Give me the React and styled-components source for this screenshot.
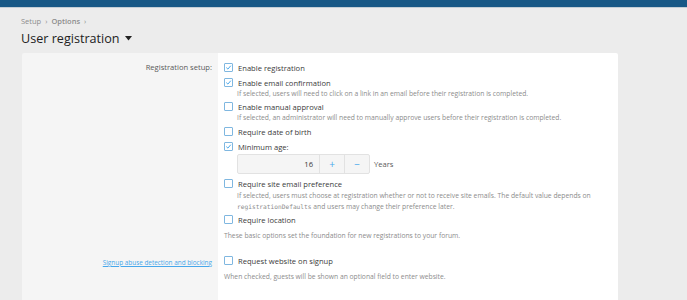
import React from 'react';
import styled, { createGlobalStyle } from 'styled-components';

const GlobalStyle = createGlobalStyle`
  html, body {
    margin: 0;
    padding: 0;
    background: #ececec;
    font-family: "Open Sans", "Liberation Sans", sans-serif;
    overflow: hidden;
  }
`;

const TopBar = styled.div`
  height: 7px;
  background: #185886;
  border-bottom: 1px solid #c4ced6;
`;

const Main = styled.div`
  padding: 7px 69px 0 21px;
`;

const Crumbs = styled.div`
  display: flex;
  align-items: center;
  gap: 4px;
  font-size: 7.5px;
  color: #8c8c8c;
  height: 12px;
`;

const Crumb = styled.span`
  font-weight: ${(p) => (p.bold ? 600 : 400)};
`;

const Title = styled.h1`
  margin: 1px 0 0;
  font-size: 12.6px;
  font-weight: 400;
  color: #222;
  display: flex;
  align-items: center;
  gap: 5px;
  height: 20px;
`;

const Block = styled.div`
  margin-top: 5px;
  margin-left: 1px;
  display: grid;
  grid-template-columns: 196px 1fr;
  border-radius: 2px 2px 0 0;
  overflow: hidden;
  height: 247px;
`;

const LabelCol = styled.div`
  background: #f5f5f5;
  padding-right: 6px;
  display: flex;
  flex-direction: column;
  align-items: flex-end;
`;

const FieldCol = styled.div`
  background: #fff;
  padding: 9px 6px 0 6px;
`;

const RowLabel = styled.div`
  font-size: 7.6px;
  color: #5a5a5a;
  margin-top: ${(p) => p.top}px;
  height: 11px;
  line-height: 11px;
`;

const Link = styled.a`
  font-size: 6.4px;
  color: #47a7eb;
  text-decoration: underline;
`;

const Option = styled.div`
  margin-bottom: ${(p) => p.gap ?? 4}px;
  margin-top: ${(p) => p.top ?? 0}px;
`;

const Check = styled.label`
  display: flex;
  align-items: center;
  gap: 5px;
  font-size: 7.6px;
  color: #3a3a3a;
  height: 11px;
`;

const Box = styled.span`
  width: 7px;
  height: 7px;
  border: 1px solid #7fb7e0;
  border-radius: 1px;
  background: #fff;
  display: flex;
  align-items: center;
  justify-content: center;
`;

const Hint = styled.div`
  padding-left: 13px;
  margin-top: ${(p) => p.top ?? 0}px;
  font-size: 6.75px;
  color: #8c8c8c;
  line-height: 11px;
  white-space: nowrap;
`;

const Explain = styled.div`
  font-size: 6.75px;
  color: #8c8c8c;
  line-height: 11px;
  margin-top: ${(p) => p.top ?? 0}px;
`;

const Code = styled.code`
  font-family: "DejaVu Sans Mono", "Liberation Mono", monospace;
  font-size: 6.2px;
`;

const SpinRow = styled.div`
  display: flex;
  align-items: center;
  gap: 4px;
  padding-left: 13px;
  margin: 2px 0 4px;
`;

const Spinner = styled.div`
  display: flex;
  width: 131px;
  height: 18px;
  border: 1px solid #e2e2e2;
  border-radius: 2px;
  background: #f5f5f5;
`;

const SpinValue = styled.div`
  flex: 1;
  display: flex;
  align-items: center;
  justify-content: flex-end;
  padding-right: 6px;
  font-size: 7.6px;
  color: #3a3a3a;
`;

const SpinButton = styled.div`
  width: 24px;
  border-left: 1px solid #e2e2e2;
  display: flex;
  align-items: center;
  justify-content: center;
  color: #47a7eb;
  font-size: 10px;
`;

const Unit = styled.span`
  font-size: 7.6px;
  color: #5a5a5a;
`;

const Tick = () => (
  <svg width="7" height="7" viewBox="0 0 7 7">
    <path d="M1.3 3.6 L2.9 5.1 L5.8 1.7" fill="none" stroke="#47a7eb" strokeWidth="1" />
  </svg>
);

const CheckItem = ({ checked, children }) => (
  <Check>
    <Box>{checked && <Tick />}</Box>
    {children}
  </Check>
);

export default function App() {
  return (
    <>
      <GlobalStyle />
      <TopBar />
      <Main>
        <Crumbs>
          <Crumb>Setup</Crumb>
          <span>›</span>
          <Crumb bold>Options</Crumb>
          <span>›</span>
        </Crumbs>
        <Title>
          User registration
          <svg width="7" height="5" viewBox="0 0 7 5">
            <path d="M0 0 H7 L3.5 4.5 Z" fill="#222" />
          </svg>
        </Title>
        <Block>
          <LabelCol>
            <RowLabel top={9}>Registration setup:</RowLabel>
            <RowLabel top={184}>
              <Link>Signup abuse detection and blocking</Link>
            </RowLabel>
          </LabelCol>
          <FieldCol>
            <Option>
              <CheckItem checked>Enable registration</CheckItem>
            </Option>
            <Option gap={2}>
              <CheckItem checked>Enable email confirmation</CheckItem>
              <Hint>If selected, users will need to click on a link in an email before their registration is completed.</Hint>
            </Option>
            <Option gap={3}>
              <CheckItem>Enable manual approval</CheckItem>
              <Hint>If selected, an administrator will need to manually approve users before their registration is completed.</Hint>
            </Option>
            <Option>
              <CheckItem>Require date of birth</CheckItem>
            </Option>
            <Option gap={0}>
              <CheckItem checked>Minimum age:</CheckItem>
            </Option>
            <SpinRow>
              <Spinner>
                <SpinValue>16</SpinValue>
                <SpinButton>+</SpinButton>
                <SpinButton>−</SpinButton>
              </Spinner>
              <Unit>Years</Unit>
            </SpinRow>
            <Option gap={2}>
              <CheckItem>Require site email preference</CheckItem>
              <Hint top={1}>
                If selected, users must choose at registration whether or not to receive site emails. The default value depends on
                <br />
                <Code>registrationDefaults</Code> and users may change their preference later.
              </Hint>
            </Option>
            <Option gap={0}>
              <CheckItem>Require location</CheckItem>
            </Option>
            <Explain top={5}>These basic options set the foundation for new registrations to your forum.</Explain>
            <Option gap={0} top={14}>
              <CheckItem>Request website on signup</CheckItem>
            </Option>
            <Explain top={5}>When checked, guests will be shown an optional field to enter website.</Explain>
          </FieldCol>
        </Block>
      </Main>
    </>
  );
}
